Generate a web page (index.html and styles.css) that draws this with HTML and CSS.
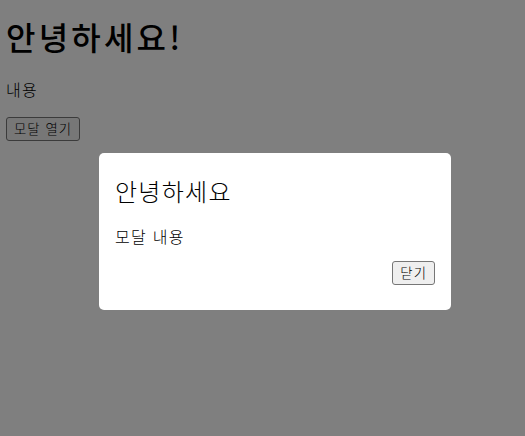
FILE: index.html
```html
<!DOCTYPE html>
<html lang="ko">
<head>
    <meta charset="UTF-8">
    <meta name="viewport" content="width=device-width, initial-scale=1.0">
    <title>모달</title>
    <link rel="stylesheet" href="styles.css">
</head>
<body>
    <h1 class="title">안녕하세요!</h1>
    <p class="text">내용</p>
    <button class="btn">모달 열기</button>

    <div class="overlay">
        <div class="modal">
            <h2 class="modal-title">안녕하세요</h2>
            <p class="modal-text">모달 내용</p>
            <div class="modal-footer">
                <button class="btn">닫기</button>
            </div>
        </div>
    </div>
</body>
</html>
```

FILE: styles.css
```css
body {
    margin: 0;
    padding: 0 6px;
    background: #ffffff;
    color: #000000;
    font-family: "Noto Sans CJK KR", sans-serif;
    font-weight: 300;
    letter-spacing: 0.08em;
}

.title {
    font-size: 32px;
    font-weight: 500;
    letter-spacing: 0.1em;
    line-height: 38px;
    margin: 17px 0 25px;
}

.text {
    font-size: 16px;
    line-height: 19px;
    margin: 0 0 16px;
}

.btn {
    font-family: "Noto Sans CJK KR", sans-serif;
    font-weight: 300;
    font-size: 13.33px;
    letter-spacing: 0.08em;
    line-height: 20px;
    padding: 1px 7px;
    color: #000000;
    background: #efefef;
    border: 1px solid #767676;
    border-radius: 3px;
}

.overlay {
    position: fixed;
    top: 0;
    left: 0;
    right: 0;
    bottom: 0;
    background: rgba(0, 0, 0, 0.5);
}

.modal {
    position: absolute;
    left: 99px;
    top: 153px;
    width: 320px;
    padding: 23px 16px 25px;
    background: #ffffff;
    border-radius: 5px;
}

.modal-title {
    font-size: 24px;
    font-weight: 300;
    line-height: 29px;
    margin: 0 0 22px;
}

.modal-text {
    font-size: 16px;
    line-height: 19px;
    margin: 0 0 15px;
}

.modal-footer {
    display: flex;
    justify-content: flex-end;
}
```
